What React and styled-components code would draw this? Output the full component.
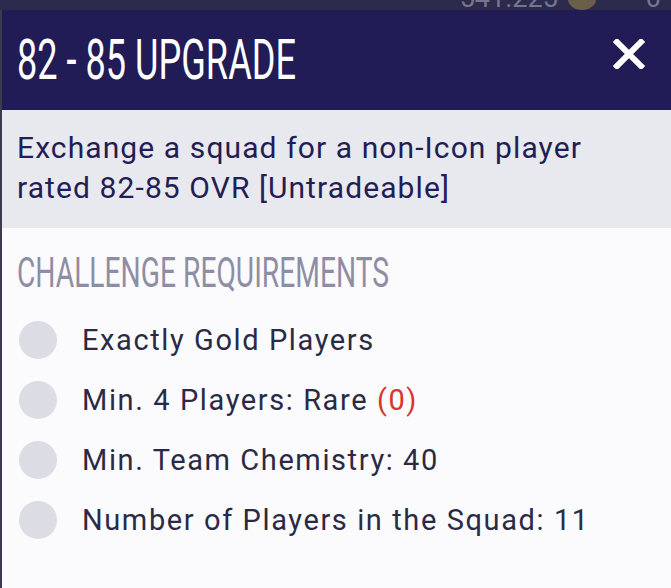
import React from "react";
import styled, { createGlobalStyle } from "styled-components";

const GlobalStyle = createGlobalStyle`
  html, body {
    margin: 0;
    padding: 0;
    background: #fbfbfd;
  }
  body {
    font-family: Roboto, "Liberation Sans", sans-serif;
  }
`;

const requirements = [
  { text: "Exactly Gold Players" },
  { text: "Min. 4 Players: Rare", count: "(0)" },
  { text: "Min. Team Chemistry: 40" },
  { text: "Number of Players in the Squad: 11" },
];

const App = () => {
  return (
    <Page>
      <GlobalStyle />
      <TopStrip>
        <Coins>541.225</Coins>
        <CoinIcon />
        <Points>0</Points>
      </TopStrip>
      <Modal>
        <Header>
          <Title>82 - 85 UPGRADE</Title>
          <CloseButton aria-label="close">
            <svg width="32" height="30" viewBox="0 0 32 30">
              <path d="M4 3 L28 27 M28 3 L4 27" stroke="#fff" strokeWidth="6" strokeLinecap="square" />
            </svg>
          </CloseButton>
        </Header>
        <Description>
          Exchange a squad for a non-Icon player
          <br />
          rated 82-85 OVR [Untradeable]
        </Description>
        <Section>
          <SectionTitle>CHALLENGE REQUIREMENTS</SectionTitle>
          <List>
            {requirements.map((req) => (
              <Row key={req.text}>
                <Dot />
                <RowText>
                  {req.text}
                  {req.count && <Count> {req.count}</Count>}
                </RowText>
              </Row>
            ))}
          </List>
        </Section>
      </Modal>
    </Page>
  );
};

export default App;

const Page = styled.div`
  width: 671px;
  height: 588px;
  overflow: hidden;
  background: #fbfbfd;
  display: flex;
  flex-direction: column;
`;

const TopStrip = styled.div`
  height: 10px;
  flex: none;
  overflow: hidden;
  background: #2c2a4d;
  display: flex;
  justify-content: flex-end;
  align-items: flex-start;
  gap: 10px;
  padding-right: 10px;
  color: #77768e;
  font-size: 27px;
  line-height: 20px;
`;

const Coins = styled.span`
  margin-top: -12px;
`;

const CoinIcon = styled.span`
  width: 28px;
  height: 22px;
  margin-top: -12px;
  margin-right: 40px;
  border-radius: 50%;
  background: #6b5f4a;
`;

const Points = styled.span`
  margin-top: -12px;
`;

const Modal = styled.div`
  flex: 1;
  display: flex;
  flex-direction: column;
  border-left: 2px solid #3b3a4f;
`;

const Header = styled.div`
  height: 100px;
  background: #211b56;
  display: flex;
  align-items: center;
  justify-content: space-between;
  padding: 0 26px 0 15px;
`;

const Title = styled.h1`
  margin: 0;
  color: #fff;
  font-family: Roboto, "Liberation Sans", sans-serif;
  font-weight: 400;
  font-size: 56px;
  line-height: 1;
  white-space: nowrap;
  transform: scaleX(0.645);
  transform-origin: left center;
`;

const CloseButton = styled.button`
  border: 0;
  background: none;
  padding: 0;
  display: flex;
  margin-top: -12px;
`;

const Description = styled.div`
  background: #e8e8ef;
  color: #221d54;
  font-size: 30px;
  letter-spacing: 1.1px;
  line-height: 40px;
  padding: 18px 15px 20px;
`;

const Section = styled.div`
  flex: 1;
  background: #fbfbfd;
  padding: 22px 15px 0;
`;

const SectionTitle = styled.h2`
  margin: 0;
  color: #8f8da3;
  font-weight: 400;
  font-size: 42px;
  line-height: 46px;
  white-space: nowrap;
  transform: scaleX(0.672);
  transform-origin: left center;
`;

const List = styled.div`
  display: flex;
  flex-direction: column;
  margin-top: 14px;
`;

const Row = styled.div`
  display: flex;
  align-items: center;
  gap: 25px;
  height: 60px;
`;

const Dot = styled.span`
  width: 38px;
  height: 38px;
  flex: none;
  border-radius: 50%;
  background: #dcdce4;
  margin-left: 2px;
`;

const RowText = styled.span`
  color: #2b2a45;
  font-size: 29px;
  letter-spacing: 1.6px;
  white-space: pre;
`;

const Count = styled.span`
  color: #d9352a;
`;
